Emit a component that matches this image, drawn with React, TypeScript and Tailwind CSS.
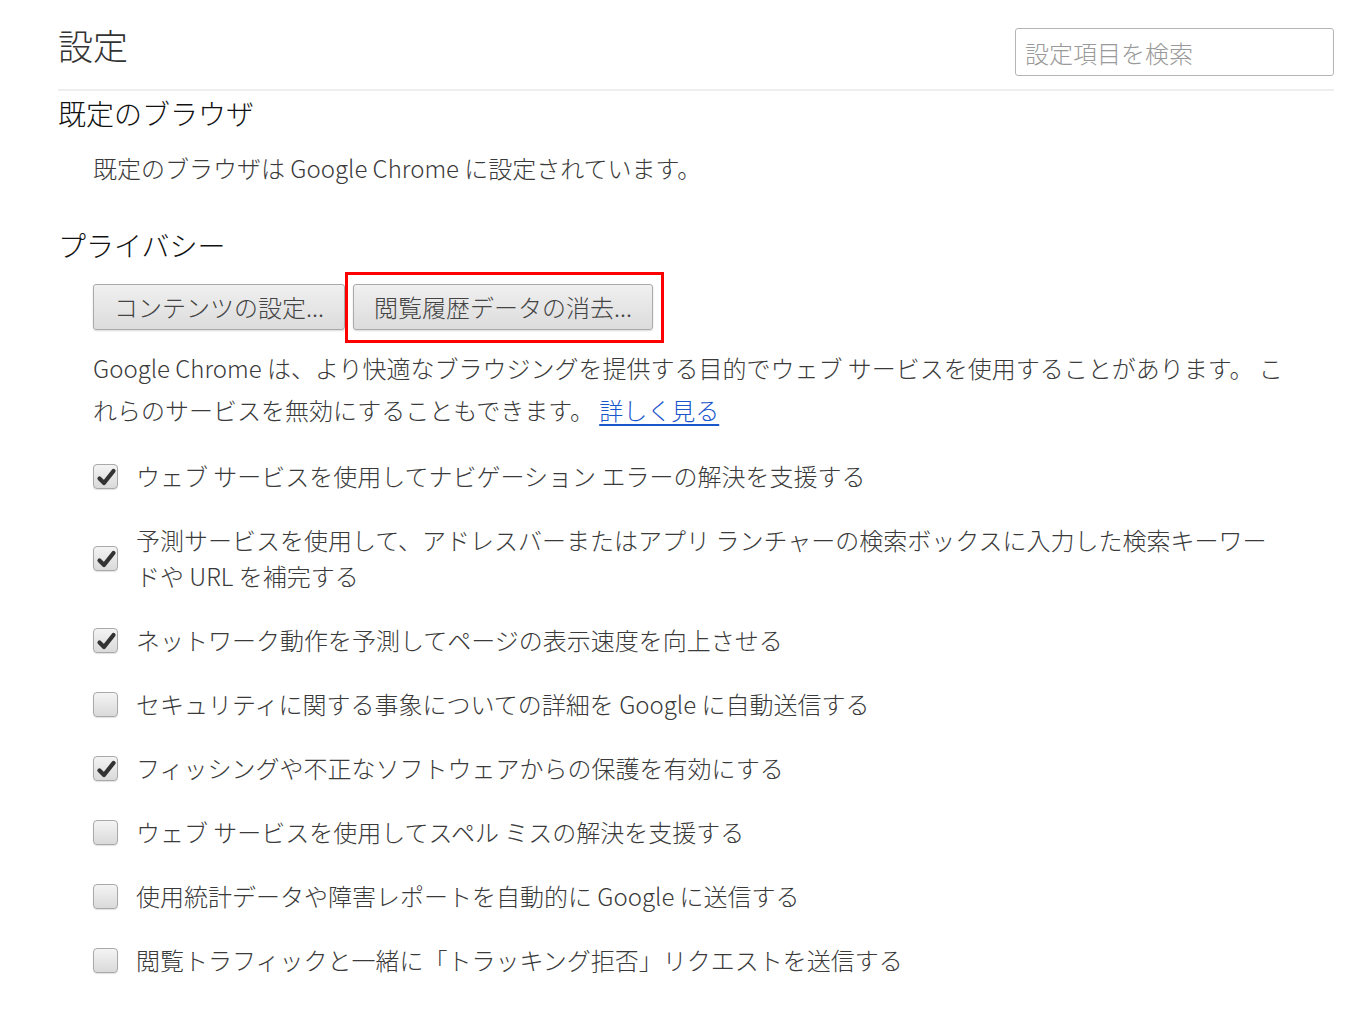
import React from 'react';

const font = { fontFamily: '"Noto Sans CJK JP", "Open Sans", sans-serif' };

interface OptionRow {
  label: string;
  checked: boolean;
  twoLine?: boolean;
}

const options: OptionRow[] = [
  { label: 'ウェブ サービスを使用してナビゲーション エラーの解決を支援する', checked: true },
  {
    label: '予測サービスを使用して、アドレスバーまたはアプリ ランチャーの検索ボックスに入力した検索キーワードや URL を補完する',
    checked: true,
    twoLine: true
  },
  { label: 'ネットワーク動作を予測してページの表示速度を向上させる', checked: true },
  { label: 'セキュリティに関する事象についての詳細を Google に自動送信する', checked: false },
  { label: 'フィッシングや不正なソフトウェアからの保護を有効にする', checked: true },
  { label: 'ウェブ サービスを使用してスペル ミスの解決を支援する', checked: false },
  { label: '使用統計データや障害レポートを自動的に Google に送信する', checked: false },
  { label: '閲覧トラフィックと一緒に「トラッキング拒否」リクエストを送信する', checked: false }
];

const Checkbox: React.FC<{ checked: boolean }> = ({ checked }) => (
  <div className="relative w-[25px] h-[25px] shrink-0 rounded-[4px] border border-[#a9a9a9] bg-gradient-to-b from-[#f4f4f4] to-[#dadada] shadow-[0_1px_1px_rgba(0,0,0,0.12)]">
    {checked && (
      <svg className="absolute left-[2px] top-[2px]" width="21" height="21" viewBox="0 0 21 21">
        <path d="M3.5 11.5 L8 16 L17.5 4" fill="none" stroke="#333333" strokeWidth="4.2" strokeLinecap="round" strokeLinejoin="round" />
      </svg>
    )}
  </div>
);

const GrayButton: React.FC<{ children: React.ReactNode; className?: string }> = ({ children, className }) => (
  <button
    className={`h-[46px] rounded-[3px] border border-[#aaaaaa] bg-gradient-to-b from-[#f0f0f0] to-[#dcdcdc] text-[24px] leading-[30px] font-light text-[#444444] shadow-[0_1px_2px_rgba(0,0,0,0.15)] ${className ?? ''}`}
    style={font}
  >
    {children}
  </button>
);

export default function App() {
  return (
    <div className="min-h-screen bg-white pl-[58px] pr-[25px] font-light text-[#3a3a3a]" style={font}>
      {/* Header */}
      <div className="flex justify-between h-[91px] border-b-2 border-[#eeeeee]">
        <h1 className="pt-[26px] text-[35px] leading-[38px] font-light text-[#333333]">設定</h1>
        <input
          type="text"
          placeholder="設定項目を検索"
          className="mt-[28px] w-[319px] h-[48px] rounded-[3px] border border-[#b5b5b5] px-[9px] text-[24px] font-light placeholder:text-[#9a9a9a] outline-none"
          style={font}
        />
      </div>

      {/* Default browser */}
      <h2 className="mt-[4px] text-[28px] leading-[36px] font-light text-[#111111]">既定のブラウザ</h2>
      <p className="mt-[19px] pl-[35px] text-[24px] leading-[36px]">
        既定のブラウザは Google Chrome に設定されています。
      </p>

      {/* Privacy */}
      <h2 className="mt-[41px] text-[28px] leading-[36px] font-light text-[#111111]">プライバシー</h2>
      <div className="mt-[21px] pl-[35px] flex gap-[8px]">
        <GrayButton className="w-[252px]">コンテンツの設定...</GrayButton>
        <span className="relative">
          <GrayButton className="w-[300px]">閲覧履歴データの消去...</GrayButton>
          <span className="absolute -left-[8px] -right-[11px] -top-[12px] -bottom-[13px] border-[3px] border-[#ff0000] pointer-events-none" />
        </span>
      </div>

      <p className="mt-[17px] ml-[35px] w-[1207px] text-[24px] leading-[42px]">
        Google Chrome は、より快適なブラウジングを提供する目的でウェブ サービスを使用することがあります。 これらのサービスを無効にすることもできます。{' '}
        <a href="#" className="text-[#1a55cc] underline underline-offset-[4px]">詳しく見る</a>
      </p>

      <div className="mt-[13px] pl-[35px]">
        {options.map((opt) => (
          <div
            key={opt.label}
            className={`flex items-center gap-[18px] ${opt.twoLine ? 'h-[100px]' : 'h-[64px]'}`}
          >
            <Checkbox checked={opt.checked} />
            <span className="w-[1145px] text-[24px] leading-[36px]">{opt.label}</span>
          </div>
        ))}
      </div>
    </div>
  );
}
